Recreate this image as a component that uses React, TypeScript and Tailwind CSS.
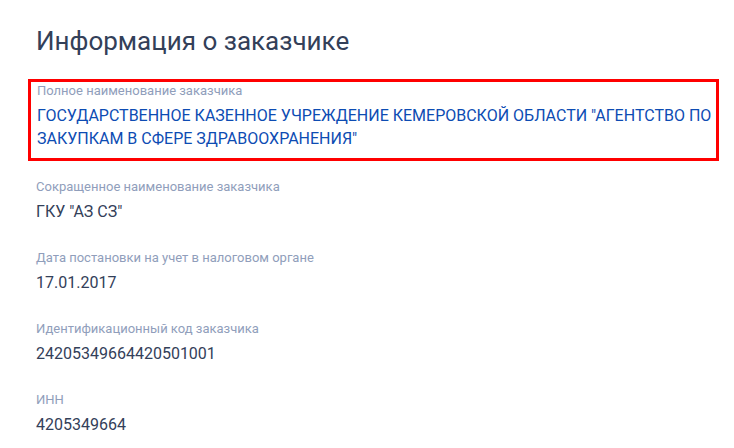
import React from 'react';

const fields = [
  { label: 'Сокращенное наименование заказчика', value: 'ГКУ "АЗ СЗ"' },
  { label: 'Дата постановки на учет в налоговом органе', value: '17.01.2017' },
  { label: 'Идентификационный код заказчика', value: '24205349664420501001' },
  { label: 'ИНН', value: '4205349664' },
];

const App: React.FC = () => {
  return (
    <div className="min-h-screen bg-white pl-[28px] pr-[15px] pt-[25px] font-['Roboto',sans-serif]">
      <h1 className="pl-[8px] text-[26px] leading-[32px] font-normal text-[#334059]">
        Информация о заказчике
      </h1>

      <div className="mt-[22px] border-[3px] border-[#ff0000] pl-[6px] pr-0 pb-[8px]">
        <div className="text-[13px] leading-[18px] text-[#909ebb]">Полное наименование заказчика</div>
        <div className="mt-[4px] text-[16px] leading-[23px] text-[#0d4cb3] uppercase">
          ГОСУДАРСТВЕННОЕ КАЗЕННОЕ УЧРЕЖДЕНИЕ КЕМЕРОВСКОЙ ОБЛАСТИ "АГЕНТСТВО ПО ЗАКУПКАМ В СФЕРЕ ЗДРАВООХРАНЕНИЯ"
        </div>
      </div>

      <div className="mt-[17px] flex flex-col gap-[26px] pl-[8px]">
        {fields.map((f) => (
          <div key={f.label}>
            <div className="text-[13px] leading-[18px] text-[#909ebb]">{f.label}</div>
            <div className="mt-[4px] text-[16px] leading-[23px] text-[#334059]">{f.value}</div>
          </div>
        ))}
      </div>
    </div>
  );
};

export default App;
